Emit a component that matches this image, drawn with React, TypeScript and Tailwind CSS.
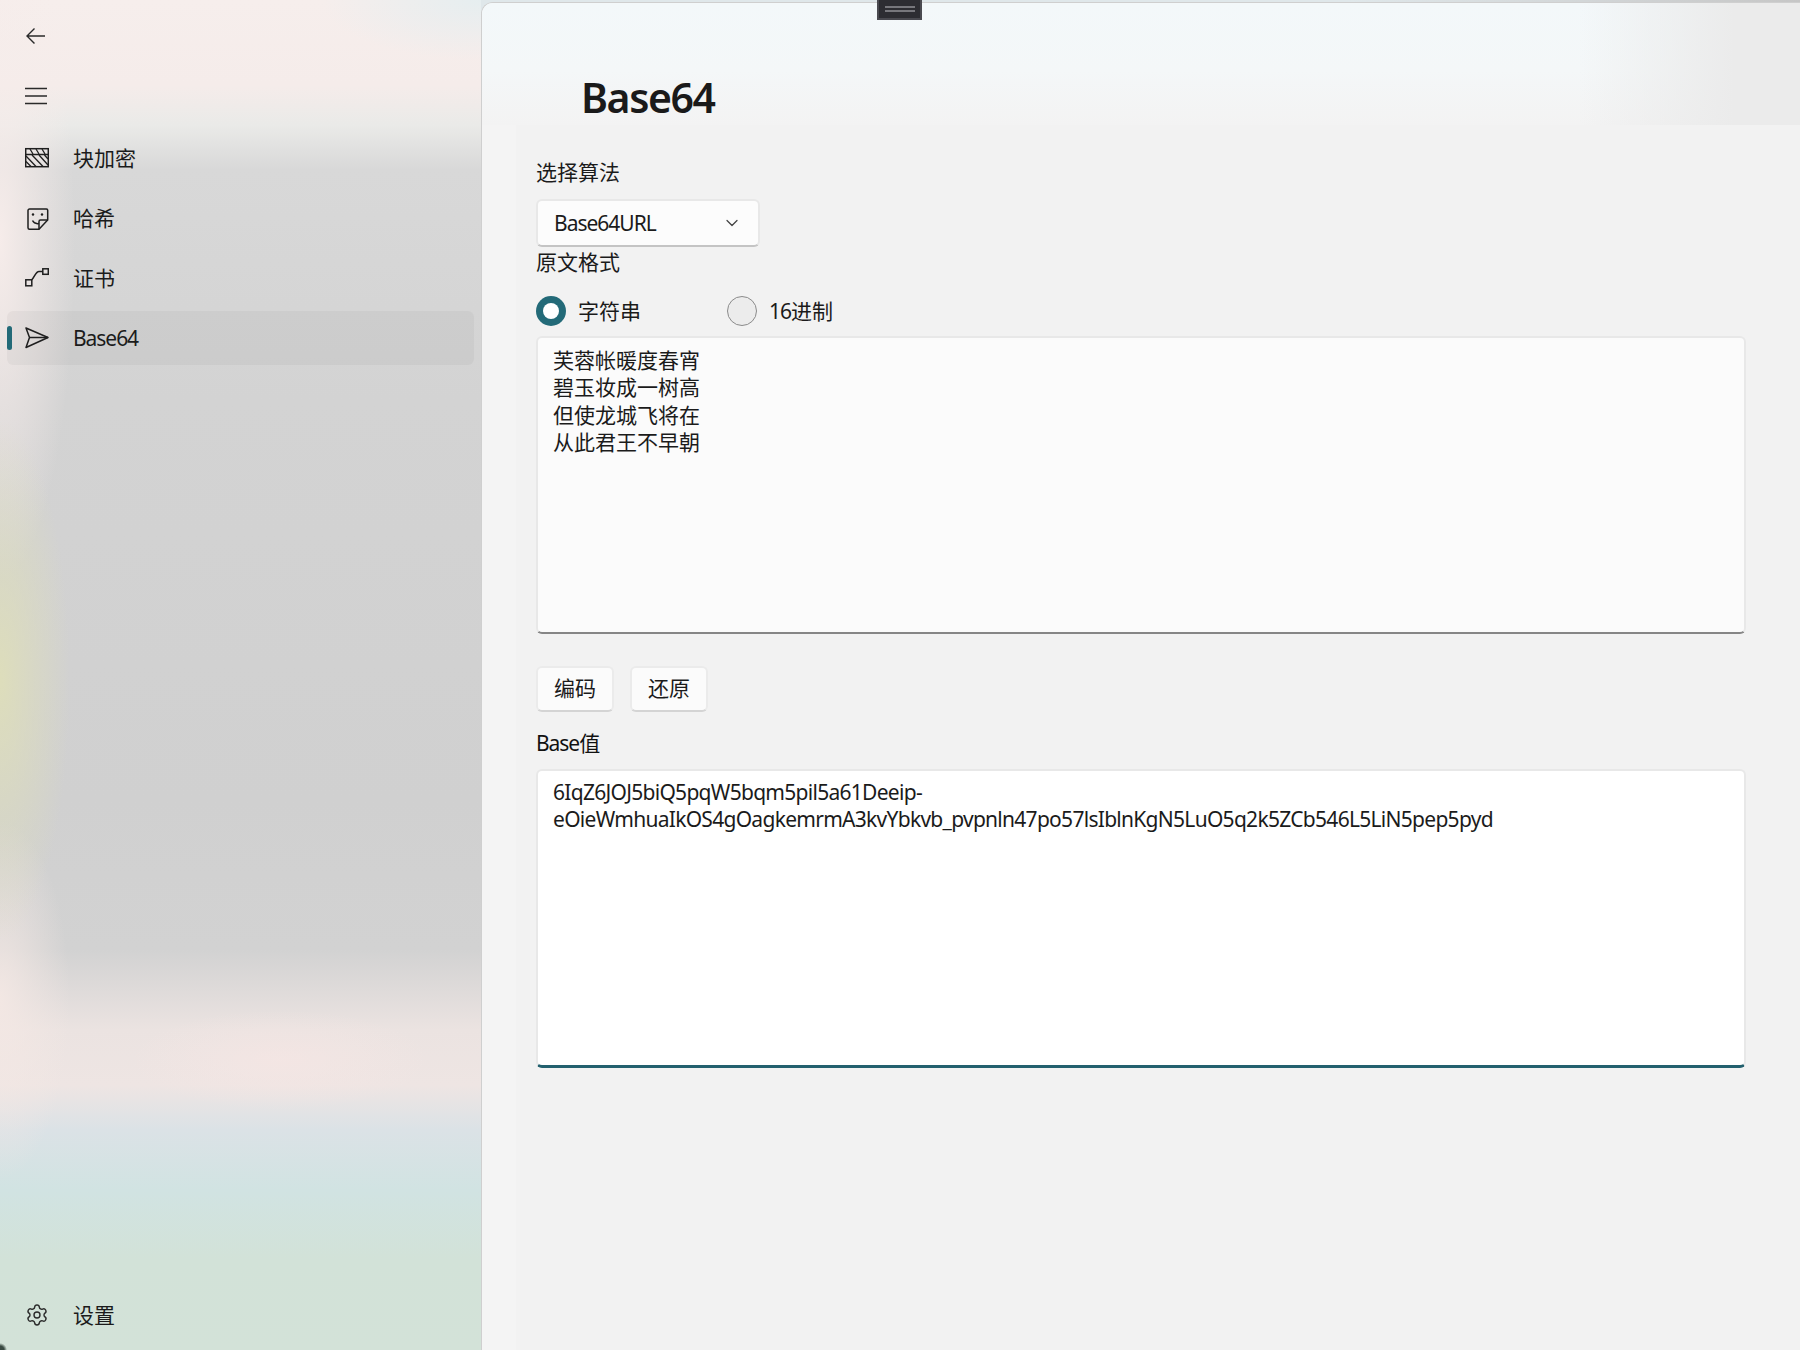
import React from 'react';
import { Settings, ChevronDown } from 'lucide-react';

const FONT = "font-['Noto_Sans','Noto_Sans_CJK_SC',sans-serif]";

function BlockIcon() {
  return (
    <svg width="24" height="24" viewBox="0 0 24 24" fill="none" stroke="#1f1f1f" strokeWidth="1.3">
      <rect x="0.7" y="2.7" width="22.6" height="18" strokeWidth="1.5" />
      <path d="M0.7 8.5H23.3" strokeWidth="1.5" />
      <path d="M5 3L8 8M11 3L14 8M17 3L20 8" />
      <path d="M1 10L11 20.5M7 9L18 20.5M14 9L23 19M19.5 9L23 13M1 15.5L6 20.5" />
    </svg>
  );
}

function NoteIcon() {
  return (
    <svg width="24" height="24" viewBox="0 0 24 24" fill="none" stroke="#1f1f1f" strokeWidth="1.5">
      <path d="M3 4.5A1.5 1.5 0 0 1 4.5 3H21.5A1.2 1.2 0 0 1 22.7 4.2V14L14 23.2H4.5A1.5 1.5 0 0 1 3 21.7Z" />
      <path d="M22.7 14H15.5A1.5 1.5 0 0 0 14 15.5V23.2" />
      <path d="M7.5 14.5C9 17.5 11 18 14 17.5" />
      <circle cx="8" cy="8.5" r="1.2" fill="#1f1f1f" stroke="none" />
      <circle cx="17" cy="8.5" r="1.2" fill="#1f1f1f" stroke="none" />
    </svg>
  );
}

function PathIcon() {
  return (
    <svg width="24" height="24" viewBox="0 0 24 24" fill="none" stroke="#1f1f1f" strokeWidth="1.5">
      <rect x="0.8" y="13.8" width="6" height="6" />
      <rect x="17.8" y="2.8" width="5.5" height="5.5" />
      <path d="M6.5 14C10 11 10.5 5.5 14 5.5H17.8" />
    </svg>
  );
}

function SendIcon() {
  return (
    <svg width="24" height="24" viewBox="0 0 24 24" fill="none" stroke="#1f1f1f" strokeWidth="1.5" strokeLinejoin="round">
      <path d="M1 2L23 11.5L1 21.5L4.5 11.5Z" />
      <path d="M4.5 11.5H23" />
    </svg>
  );
}

function NavRow({ icon, label, active }: { icon: React.ReactNode; label?: string; active?: boolean }) {
  return (
    <div className="h-[60px] shrink-0 flex items-center px-[3px]">
      <div className={`relative w-full h-[54px] mx-[4px] pl-[18px] flex items-center rounded-[6px] ${active ? 'bg-black/[0.035]' : ''}`}>
        {active && <span className="absolute left-0 top-[15px] w-[5px] h-[24px] rounded-full bg-[#236a78]" />}
        <span className="w-6 h-6 shrink-0 flex items-center justify-center">{icon}</span>
        {label && <span className={`ml-6 text-[21px] leading-[28px] text-[#1b1b1b] ${active ? 'tracking-[-0.05em]' : ''}`}>{label}</span>}
      </div>
    </div>
  );
}

function Radio({ label, checked, width }: { label: React.ReactNode; checked?: boolean; width: string }) {
  return (
    <div className={`flex items-center ${width}`}>
      {checked ? (
        <span className="w-[30px] h-[30px] rounded-full bg-[#236a78] flex items-center justify-center">
          <span className="w-[16px] h-[16px] rounded-full bg-white" />
        </span>
      ) : (
        <span className="w-[30px] h-[30px] rounded-full border border-[#8b8b8b] bg-[#ececec]" />
      )}
      <span className="ml-[12px] text-[21px] leading-[28px] text-[#1b1b1b]">{label}</span>
    </div>
  );
}

export default function App() {
  return (
    <div className={`${FONT} relative flex w-full h-[1350px] overflow-hidden bg-[linear-gradient(90deg,#dfe7ea_0%,#dfe7ea_75%,#c6c6c6_100%)]`}>
      {/* acrylic nav pane */}
      <aside className="relative w-[481px] shrink-0 flex flex-col pt-[6px] bg-[radial-gradient(ellipse_160px_60px_at_481px_0px,rgba(228,238,240,0.9),rgba(228,238,240,0)),radial-gradient(ellipse_70px_260px_at_0px_680px,rgba(222,222,186,0.95),rgba(222,222,186,0)),radial-gradient(ellipse_75px_340px_at_0px_240px,rgba(246,236,234,1),rgba(246,236,234,0)),radial-gradient(ellipse_70px_180px_at_0px_1000px,rgba(244,232,228,0.9),rgba(244,232,228,0)),radial-gradient(ellipse_150px_50px_at_280px_1060px,rgba(246,230,228,0.7),rgba(246,230,228,0)),linear-gradient(180deg,#f6eeec_0px,#f5ecea_85px,#eaeae8_125px,#d8d8d8_170px,#d3d3d3_400px,#d0d0d0_800px,#d2d2d2_950px,#ebe3e1_1030px,#eee5e3_1085px,#dbe2e6_1130px,#d1e3e2_1190px,#d2e2d8_1260px,#d3e2d8_1350px)]">
        <NavRow
          icon={
            <svg width="24" height="24" viewBox="0 0 24 24" fill="none" stroke="#2a2a2a" strokeWidth="1.4" className="-ml-[2px]">
              <path d="M3 12H21M10.5 4.5L3 12L10.5 19.5" />
            </svg>
          }
        />
        <NavRow
          icon={
            <svg width="24" height="24" viewBox="0 0 24 24" fill="none" stroke="#2a2a2a" strokeWidth="1.4" className="-ml-[2px]">
              <path d="M1 4.5H23M1 12H23M1 19.5H23" />
            </svg>
          }
        />
        <div className="h-[2px] shrink-0" />
        <NavRow icon={<BlockIcon />} label="块加密" />
        <NavRow icon={<NoteIcon />} label="哈希" />
        <NavRow icon={<PathIcon />} label="证书" />
        <NavRow icon={<SendIcon />} label="Base64" active />
        <div className="mt-auto pb-[5px]">
          <NavRow icon={<Settings size={24} strokeWidth={1.4} color="#2a2a2a" />} label="设置" />
        </div>
        <span className="absolute left-0 bottom-0 w-[8px] h-[8px] bg-[radial-gradient(circle_at_0px_8px,#3a4a42_0px,#3a4a42_4px,rgba(58,74,66,0)_7px)]" />
      </aside>

      {/* content panel */}
      <main className="relative flex-1 mt-[2px] rounded-tl-[12px] border-l border-t border-[#cfcfcf] bg-[linear-gradient(90deg,#f4f4f4_0px,#f4f4f4_34px,#f2f2f2_34px)] overflow-hidden">
        <header className="h-[122px] pl-[99px] pt-[72px] bg-[linear-gradient(180deg,#f3f8fa_0%,#f4f7f8_55%,#f3f3f3_100%)]">
          <h1 className="text-[41px] leading-[44px] font-semibold text-[#1a1a1a] tracking-[-0.035em]">Base64</h1>
        </header>
        <span className="absolute right-0 top-0 w-[220px] h-[122px] bg-[linear-gradient(90deg,rgba(235,235,235,0),#ebebeb_70%)]" />

        <div className="pl-[54px] pr-[54px] pt-[33px]">
          <div className="h-[28px] text-[21px] leading-[28px] text-[#1b1b1b]">选择算法</div>
          <div className="mt-[13px] w-[224px] h-[48px] pl-[16px] pr-[16px] flex items-center justify-between rounded-[6px] bg-[#fcfcfc] border-2 border-[#e8e8e8] border-b-[#c4c4c4]">
            <span className="text-[21px] leading-[28px] text-[#1b1b1b] tracking-[-0.048em]">Base64URL</span>
            <ChevronDown size={20} strokeWidth={1.5} color="#444" />
          </div>

          <div className="mt-[1px] h-[28px] text-[21px] leading-[28px] text-[#1b1b1b]">原文格式</div>
          <div className="mt-[20px] h-[30px] flex items-center">
            <Radio label="字符串" checked width="w-[191px]" />
            <Radio label={<><span className="tracking-[-0.05em]">16</span>进制</>} width="w-[200px]" />
          </div>

          <div className="mt-[10px] h-[298px] pl-[15px] pr-[15px] pt-[9px] rounded-[6px] bg-[#fbfbfb] border-2 border-[#e8e8e8] border-b-[#868686] text-[21px] leading-[27.4px] text-[#1b1b1b] whitespace-pre-line">
            {'芙蓉帐暖度春宵\n碧玉妆成一树高\n但使龙城飞将在\n从此君王不早朝'}
          </div>

          <div className="mt-[32px] flex gap-[16px]">
            <button className="w-[78px] h-[46px] rounded-[6px] bg-[#fbfbfb] border-2 border-[#ebebeb] border-b-[#d4d4d4] text-[21px] text-[#1b1b1b]">编码</button>
            <button className="w-[78px] h-[46px] rounded-[6px] bg-[#fbfbfb] border-2 border-[#ebebeb] border-b-[#d4d4d4] text-[21px] text-[#1b1b1b]">还原</button>
          </div>

          <div className="mt-[17px] h-[28px] text-[21px] leading-[28px] text-[#111]"><span className="tracking-[-0.05em]">Base</span>值</div>
          <div className="mt-[12px] h-[299px] pl-[15px] pr-[15px] pt-[8px] rounded-[6px] bg-white border-2 border-[#e8e8e8] border-b-[3px] border-b-[#23606e] text-[21px] leading-[27.4px] text-[#1b1b1b] tracking-[-0.034em] break-words">
            6IqZ6JOJ5biQ5pqW5bqm5pil5a61Deeip-eOieWmhuaIkOS4gOagkemrmA3kvYbkvb_pvpnln47po57lsIblnKgN5LuO5q2k5ZCb546L5LiN5pep5pyd
          </div>
        </div>
      </main>

      {/* drag handle */}
      <div className="absolute left-[877px] top-0 w-[45px] h-[20px] bg-[#2d2d32] border-b-[2px] border-x-[2px] border-[#4a4a50] flex flex-col items-center justify-center gap-[2px] pb-[1px]">
        <span className="w-[30px] h-[2px] bg-[#77777c]" />
        <span className="w-[30px] h-[2px] bg-[#77777c]" />
      </div>
    </div>
  );
}
